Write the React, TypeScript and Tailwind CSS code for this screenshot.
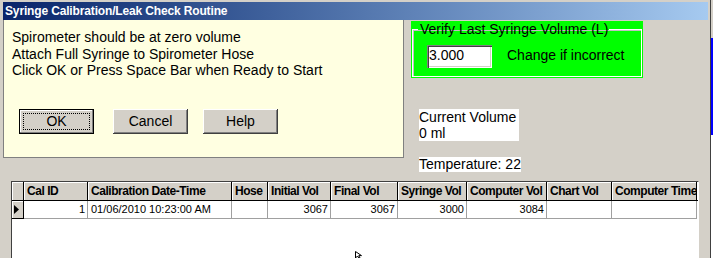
const cols = [
  { label: "Cal ID", w: "w-[64px]", val: "1", right: true },
  { label: "Calibration Date-Time", w: "w-[144px]", val: "01/06/2010 10:23:00 AM", right: false },
  { label: "Hose", w: "w-[36px]", val: "", right: false },
  { label: "Initial Vol", w: "w-[63px]", val: "3067", right: true },
  { label: "Final Vol", w: "w-[67px]", val: "3067", right: true },
  { label: "Syringe Vol", w: "w-[69px]", val: "3000", right: true },
  { label: "Computer Vol", w: "w-[80px]", val: "3084", right: true },
  { label: "Chart Vol", w: "w-[65px]", val: "", right: true },
  { label: "Computer Time", w: "w-[85px]", val: "", right: false },
];

function WinButton({ label, focused }: { label: string; focused?: boolean }) {
  if (focused) {
    return (
      <div className="relative flex h-[25px] w-[75px] items-center justify-center border border-black bg-[#d4d0c8] text-[14px] shadow-[inset_-1px_-1px_0_#808080,inset_1px_1px_0_#fff]">
        <span className="absolute inset-[3px] border border-dotted border-black" />
        {label}
      </div>
    );
  }
  return (
    <div className="flex h-[25px] w-[75px] items-center justify-center bg-[#d4d0c8] text-[14px] shadow-[inset_-1px_-1px_0_#404040,inset_1px_1px_0_#fff,inset_-2px_-2px_0_#808080]">
      {label}
    </div>
  );
}

export default function App() {
  return (
    <div className="relative flex h-[258px] w-[713px] overflow-hidden bg-[#d4d0c8] font-['Liberation_Sans',Arial,sans-serif] text-black">
      <div className="flex w-[710px] flex-col pl-[3px] pr-[2px] pt-[2px]">
        {/* title bar */}
        <div className="flex h-[18px] shrink-0 items-center bg-gradient-to-r from-[#0a246a] to-[#a6caf0] pl-[2px] text-[12px] font-bold tracking-[-0.15px] text-white">
          Syringe Calibration/Leak Check Routine
        </div>

        <div className="flex items-start">
          {/* instructions panel */}
          <div className="h-[138px] w-[401px] shrink-0 border-b border-l border-r border-[#808080] bg-[#ffffe1]">
            <div className="pl-[8px] pt-[9px] text-[14px] leading-[16.5px]">
              <p>Spirometer should be at zero volume</p>
              <p>Attach Full Syringe to Spirometer Hose</p>
              <p>Click OK or Press Space Bar when Ready to Start</p>
            </div>
            <div className="mt-[30px] flex pl-[15px]">
              <WinButton label="OK" focused />
              <div className="ml-[19px]">
                <WinButton label="Cancel" />
              </div>
              <div className="ml-[15px]">
                <WinButton label="Help" />
              </div>
            </div>
          </div>

          {/* right side */}
          <div className="ml-[7px] flex flex-col items-start">
            <div className="mt-px h-[57px] w-[232px] bg-[#00ff00] px-px">
              <fieldset className="h-[56px] border border-white shadow-[inset_1px_1px_0_#c0c0c0]">
                <legend className="ml-[5px] pl-[2px] pr-px text-[14px] leading-[16px]">
                  Verify Last Syringe Volume (L)
                </legend>
                <div className="ml-[14px] mt-[8px] flex items-center">
                  <input
                    readOnly
                    value="3.000"
                    className="h-[23px] w-[65px] bg-white pl-[2px] pb-[3px] text-[14px] text-black outline-none shadow-[inset_1px_1px_0_#808080,inset_2px_2px_0_#404040,inset_-1px_-1px_0_#fff,inset_-2px_-2px_0_#d4d0c8]"
                  />
                  <span className="ml-[15px] pb-[2px] text-[14px]">Change if incorrect</span>
                </div>
              </fieldset>
            </div>

            <div className="ml-[8px] mt-[31px] w-[100px] bg-white text-[14px] leading-[16px]">
              <p>Current Volume</p>
              <p>0 ml</p>
            </div>
            <div className="ml-[8px] mt-[16px] h-[15px] bg-white text-[14px] leading-[14px]">
              Temperature: 22
            </div>
          </div>
        </div>

        {/* grid */}
        <div className="ml-[8px] mt-[9px] w-[688px] flex-1 border-l border-t border-r border-l-[#404040] border-t-[#404040] border-r-white bg-white">
          <div className="flex border-b border-black">
            <div className="h-[18px] w-[12px] border-r border-black bg-[#d4d0c8] shadow-[inset_1px_1px_0_#fff]" />
            {cols.map((c) => (
              <div
                key={c.label}
                className={`${c.w} h-[18px] overflow-hidden whitespace-nowrap border-r border-black bg-[#d4d0c8] pl-[3px] text-[12px] font-bold leading-[18px] tracking-[-0.45px] shadow-[inset_1px_1px_0_#fff]`}
              >
                {c.label}
              </div>
            ))}
          </div>
          <div className="flex">
            <div className="flex h-[18px] w-[12px] items-center border-b border-r border-black bg-[#d4d0c8] pl-[2px] shadow-[inset_1px_1px_0_#fff]">
              <svg width="6" height="9" viewBox="0 0 6 9">
                <path d="M0 0 L5 4.5 L0 9 Z" fill="#000" />
              </svg>
            </div>
            {cols.map((c) => (
              <div
                key={c.label}
                className={`${c.w} h-[18px] overflow-hidden whitespace-nowrap border-b border-r border-[#a0a0a0] text-[11px] leading-[17px] ${c.right ? "pr-[2px] text-right" : "pl-[3px]"}`}
              >
                {c.val}
              </div>
            ))}
          </div>
        </div>
      </div>

      {/* neighbouring window edge */}
      <div className="w-px bg-[#404040]" />
      <div className="flex w-[2px] flex-col">
        <div className="h-[38px] bg-[#d4d0c8]" />
        <div className="h-[97px] bg-[#0000ff]" />
        <div className="flex-1 bg-white" />
      </div>

      {/* mouse pointer */}
      <svg className="absolute left-[355px] top-[251px]" width="8" height="8" viewBox="0 0 8 8">
        <path d="M0.5 0.5 L0.5 7 L2.5 5 L4 7.5 L5 7 L3.8 4.6 L6.5 4.6 Z" fill="#fff" stroke="#000" strokeWidth="1" />
      </svg>
    </div>
  );
}
